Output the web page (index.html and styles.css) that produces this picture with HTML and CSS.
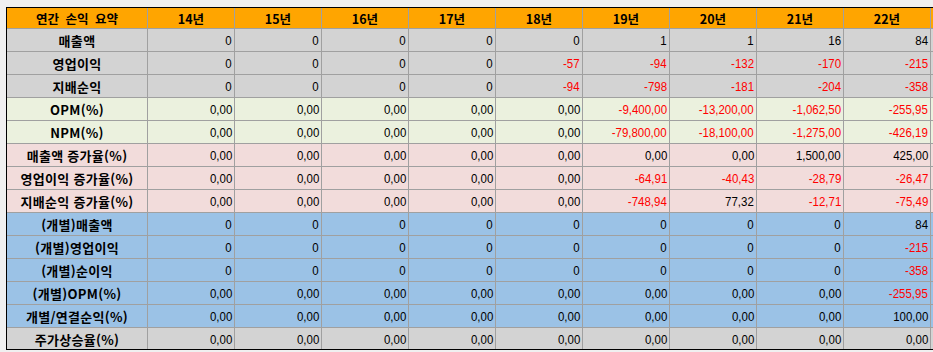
FILE: index.html
```html
<!DOCTYPE html>
<html lang="ko">
<head>
<meta charset="utf-8">
<title>연간 손익 요약</title>
<link rel="stylesheet" href="styles.css">
</head>
<body>
<div class="frame">
  <div class="grid">
    <div class="c hd title">연간 손익 요약</div><div class="c hd">14년</div><div class="c hd">15년</div><div class="c hd">16년</div><div class="c hd">17년</div><div class="c hd">18년</div><div class="c hd">19년</div><div class="c hd">20년</div><div class="c hd">21년</div><div class="c hd">22년</div><div class="c hd"></div>

    <div class="c gy lbl">매출액</div><div class="c gy n"><span>0</span></div><div class="c gy n"><span>0</span></div><div class="c gy n"><span>0</span></div><div class="c gy n"><span>0</span></div><div class="c gy n"><span>0</span></div><div class="c gy n"><span>1</span></div><div class="c gy n"><span>1</span></div><div class="c gy n"><span>16</span></div><div class="c gy n"><span>84</span></div><div class="c gy"></div>

    <div class="c gy lbl">영업이익</div><div class="c gy n"><span>0</span></div><div class="c gy n"><span>0</span></div><div class="c gy n"><span>0</span></div><div class="c gy n"><span>0</span></div><div class="c gy n neg"><span>-57</span></div><div class="c gy n neg"><span>-94</span></div><div class="c gy n neg"><span>-132</span></div><div class="c gy n neg"><span>-170</span></div><div class="c gy n neg"><span>-215</span></div><div class="c gy"></div>

    <div class="c gy lbl">지배순익</div><div class="c gy n"><span>0</span></div><div class="c gy n"><span>0</span></div><div class="c gy n"><span>0</span></div><div class="c gy n"><span>0</span></div><div class="c gy n neg"><span>-94</span></div><div class="c gy n neg"><span>-798</span></div><div class="c gy n neg"><span>-181</span></div><div class="c gy n neg"><span>-204</span></div><div class="c gy n neg"><span>-358</span></div><div class="c gy"></div>

    <div class="c gr lbl">OPM(%)</div><div class="c gr n"><span>0,00</span></div><div class="c gr n"><span>0,00</span></div><div class="c gr n"><span>0,00</span></div><div class="c gr n"><span>0,00</span></div><div class="c gr n"><span>0,00</span></div><div class="c gr n neg"><span>-9,400,00</span></div><div class="c gr n neg"><span>-13,200,00</span></div><div class="c gr n neg"><span>-1,062,50</span></div><div class="c gr n neg"><span>-255,95</span></div><div class="c gr"></div>

    <div class="c gr lbl">NPM(%)</div><div class="c gr n"><span>0,00</span></div><div class="c gr n"><span>0,00</span></div><div class="c gr n"><span>0,00</span></div><div class="c gr n"><span>0,00</span></div><div class="c gr n"><span>0,00</span></div><div class="c gr n neg"><span>-79,800,00</span></div><div class="c gr n neg"><span>-18,100,00</span></div><div class="c gr n neg"><span>-1,275,00</span></div><div class="c gr n neg"><span>-426,19</span></div><div class="c gr"></div>

    <div class="c pk lbl">매출액 증가율(%)</div><div class="c pk n"><span>0,00</span></div><div class="c pk n"><span>0,00</span></div><div class="c pk n"><span>0,00</span></div><div class="c pk n"><span>0,00</span></div><div class="c pk n"><span>0,00</span></div><div class="c pk n"><span>0,00</span></div><div class="c pk n"><span>0,00</span></div><div class="c pk n"><span>1,500,00</span></div><div class="c pk n"><span>425,00</span></div><div class="c pk"></div>

    <div class="c pk lbl">영업이익 증가율(%)</div><div class="c pk n"><span>0,00</span></div><div class="c pk n"><span>0,00</span></div><div class="c pk n"><span>0,00</span></div><div class="c pk n"><span>0,00</span></div><div class="c pk n"><span>0,00</span></div><div class="c pk n neg"><span>-64,91</span></div><div class="c pk n neg"><span>-40,43</span></div><div class="c pk n neg"><span>-28,79</span></div><div class="c pk n neg"><span>-26,47</span></div><div class="c pk"></div>

    <div class="c pk lbl">지배순익 증가율(%)</div><div class="c pk n"><span>0,00</span></div><div class="c pk n"><span>0,00</span></div><div class="c pk n"><span>0,00</span></div><div class="c pk n"><span>0,00</span></div><div class="c pk n"><span>0,00</span></div><div class="c pk n neg"><span>-748,94</span></div><div class="c pk n"><span>77,32</span></div><div class="c pk n neg"><span>-12,71</span></div><div class="c pk n neg"><span>-75,49</span></div><div class="c pk"></div>

    <div class="c bl lbl">(개별)매출액</div><div class="c bl n"><span>0</span></div><div class="c bl n"><span>0</span></div><div class="c bl n"><span>0</span></div><div class="c bl n"><span>0</span></div><div class="c bl n"><span>0</span></div><div class="c bl n"><span>0</span></div><div class="c bl n"><span>0</span></div><div class="c bl n"><span>0</span></div><div class="c bl n"><span>84</span></div><div class="c bl"></div>

    <div class="c bl lbl">(개별)영업이익</div><div class="c bl n"><span>0</span></div><div class="c bl n"><span>0</span></div><div class="c bl n"><span>0</span></div><div class="c bl n"><span>0</span></div><div class="c bl n"><span>0</span></div><div class="c bl n"><span>0</span></div><div class="c bl n"><span>0</span></div><div class="c bl n"><span>0</span></div><div class="c bl n neg"><span>-215</span></div><div class="c bl"></div>

    <div class="c bl lbl">(개별)순이익</div><div class="c bl n"><span>0</span></div><div class="c bl n"><span>0</span></div><div class="c bl n"><span>0</span></div><div class="c bl n"><span>0</span></div><div class="c bl n"><span>0</span></div><div class="c bl n"><span>0</span></div><div class="c bl n"><span>0</span></div><div class="c bl n"><span>0</span></div><div class="c bl n neg"><span>-358</span></div><div class="c bl"></div>

    <div class="c bl lbl">(개별)OPM(%)</div><div class="c bl n"><span>0,00</span></div><div class="c bl n"><span>0,00</span></div><div class="c bl n"><span>0,00</span></div><div class="c bl n"><span>0,00</span></div><div class="c bl n"><span>0,00</span></div><div class="c bl n"><span>0,00</span></div><div class="c bl n"><span>0,00</span></div><div class="c bl n"><span>0,00</span></div><div class="c bl n neg"><span>-255,95</span></div><div class="c bl"></div>

    <div class="c bl lbl">개별/연결순익(%)</div><div class="c bl n"><span>0,00</span></div><div class="c bl n"><span>0,00</span></div><div class="c bl n"><span>0,00</span></div><div class="c bl n"><span>0,00</span></div><div class="c bl n"><span>0,00</span></div><div class="c bl n"><span>0,00</span></div><div class="c bl n"><span>0,00</span></div><div class="c bl n"><span>0,00</span></div><div class="c bl n"><span>100,00</span></div><div class="c bl"></div>

    <div class="c gy lbl">주가상승율(%)</div><div class="c gy n"><span>0,00</span></div><div class="c gy n"><span>0,00</span></div><div class="c gy n"><span>0,00</span></div><div class="c gy n"><span>0,00</span></div><div class="c gy n"><span>0,00</span></div><div class="c gy n"><span>0,00</span></div><div class="c gy n"><span>0,00</span></div><div class="c gy n"><span>0,00</span></div><div class="c gy n"><span>0,00</span></div><div class="c gy"></div>
  </div>
</div>
</body>
</html>
```

FILE: styles.css
```css
html, body {
  margin: 0;
  padding: 0;
  background: #f0f0f0;
}

.frame {
  margin: 7px 0 0 6px;
  border-top: 1px solid #000;
  border-left: 1px solid #000;
  border-bottom: 1px solid #000;
  height: 341px;
  overflow: hidden;
}

.grid {
  display: grid;
  grid-template-columns: 140px repeat(9, 86px) 40px;
  grid-template-rows: 20px repeat(14, 22px);
  gap: 1px;
  background: #a0a0a0;
  width: max-content;
}

.c {
  display: flex;
  align-items: center;
  justify-content: center;
  font-family: "Liberation Sans", sans-serif;
  font-size: 13.5px;
  color: #000;
  white-space: nowrap;
  overflow: hidden;
}

.hd {
  background: #ffa500;
  font-family: "Noto Sans CJK KR", sans-serif;
  font-weight: 700;
  font-size: 12.5px;
}

.title {
  word-spacing: 3px;
}

.lbl {
  font-family: "Noto Sans CJK KR", sans-serif;
  font-weight: 700;
  font-size: 13px;
  letter-spacing: 0.3px;
}

.n {
  justify-content: flex-end;
  padding-right: 2px;
}

.n span {
  display: inline-block;
  transform: scaleX(0.85);
  transform-origin: right center;
}

.neg {
  color: #ff0000;
}

.gy { background: #d3d3d3; }
.gr { background: #ebf1de; }
.pk { background: #f2dcdb; }
.bl { background: #9bc2e6; }
```
